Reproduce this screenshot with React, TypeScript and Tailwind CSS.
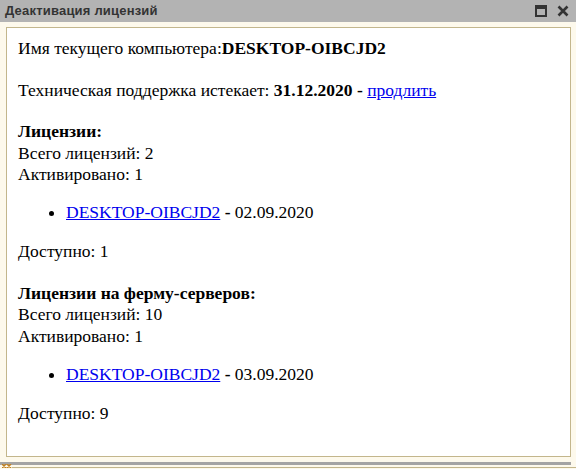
export default function App() {
  const serif = { fontFamily: '"Liberation Serif", "Times New Roman", serif' };
  return (
    <div className="w-[576px] h-[469px] bg-[#fdf9ec] flex flex-col overflow-hidden">
      <div className="h-[22px] bg-[#b3b3b3] flex items-center justify-between pl-[5px] pr-[7px] shrink-0">
        <span className="text-[13px] font-bold text-[#333333] tracking-[0.2px]" style={{ fontFamily: '"Liberation Sans", Arial, sans-serif' }}>
          Деактивация лицензий
        </span>
        <div className="flex items-center gap-[10px]">
          <svg width="12" height="12" viewBox="0 0 12 12">
            <rect x="1" y="1" width="10" height="10" fill="none" stroke="#333" strokeWidth="2" />
            <rect x="1" y="1" width="10" height="3" fill="#333" />
          </svg>
          <svg width="12" height="12" viewBox="0 0 12 12">
            <path d="M1.5 1.5 L10.5 10.5 M10.5 1.5 L1.5 10.5" stroke="#333" strokeWidth="2.6" />
          </svg>
        </div>
      </div>
      <div className="pl-[6px] pr-[5px] pt-[5px] shrink-0">
        <div className="h-[430px] bg-white border border-[#c3b68c] px-[11px] pt-[10px] text-[17.5px] leading-[21.5px] text-black" style={serif}>
          <p>
            Имя текущего компьютера:<b>DESKTOP-OIBCJD2</b>
          </p>
          <p className="mt-[20px]">
            Техническая поддержка истекает: <b>31.12.2020 - </b>
            <a href="#" className="text-[#0000ee] underline">продлить</a>
          </p>
          <p className="mt-[20px] font-bold">Лицензии:</p>
          <p>Всего лицензий: 2</p>
          <p>Активировано: 1</p>
          <ul className="list-disc pl-[48px] mt-[16px]">
            <li>
              <a href="#" className="text-[#0000ee] underline">DESKTOP-OIBCJD2</a>
              <b> - </b>02.09.2020
            </li>
          </ul>
          <p className="mt-[17.5px]">Доступно: 1</p>
          <p className="mt-[20.5px] font-bold">Лицензии на ферму-серверов:</p>
          <p>Всего лицензий: 10</p>
          <p>Активировано: 1</p>
          <ul className="list-disc pl-[48px] mt-[16.5px]">
            <li>
              <a href="#" className="text-[#0000ee] underline">DESKTOP-OIBCJD2</a>
              <b> - </b>03.09.2020
            </li>
          </ul>
          <p className="mt-[17.5px]">Доступно: 9</p>
        </div>
      </div>
      <div className="h-[5px] shrink-0" />
      <div className="h-[3px] bg-[#a4a4a4] shrink-0 mr-[5px]" />
      <div className="flex items-end shrink-0 h-[3px]">
        <svg width="10" height="4" viewBox="0 0 10 4" className="ml-[2px]">
          <path d="M0 0 L4 4 M4 0 L0 4 M5 0 L9 4 M9 0 L5 4" stroke="#c08020" strokeWidth="1.5" />
        </svg>
        <div className="flex-1 h-[1px] bg-[#c3b68c]" />
      </div>
    </div>
  );
}
